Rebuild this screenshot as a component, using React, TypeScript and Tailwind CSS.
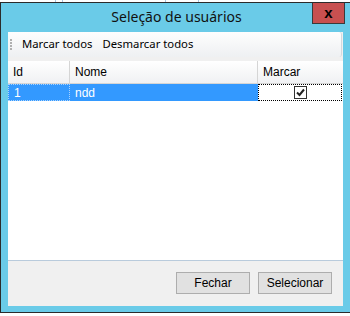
import React from 'react'

const ui = { fontFamily: '"Segoe UI", "Noto Sans", "Open Sans", sans-serif' }
const ms = { fontFamily: '"Liberation Sans", Arial, sans-serif' }

function Check() {
  return (
    <div className="w-[13px] h-[13px] border border-[#333333] bg-white flex items-center justify-center">
      <svg width="9" height="9" viewBox="0 0 9 9">
        <path d="M1 4.5 L3.5 7 L8 1.5" fill="none" stroke="#222" strokeWidth="2" />
      </svg>
    </div>
  )
}

export default function App() {
  return (
    <div className="w-[350px] h-[316px] bg-white overflow-hidden text-black" style={ui}>
      <div className="flex h-[2px] bg-white">
        <div className="ml-[55px] w-[8px] h-[2px] border-x border-[#a8c4e0]" />
        <div className="ml-[102px] w-[34px] h-[2px] border-x border-[#a8c4e0]" />
      </div>
      <div className="w-[360px] h-[311px] bg-[#6acbe8] border-l border-t border-b border-[#2b2b2b] flex flex-col">
        {/* title bar */}
        <div className="h-[29px] flex items-start shrink-0">
          <div className="w-[311px] h-[27px] flex items-center justify-center text-[14px] text-[#111] pl-[40px]">
            Seleção de usuários
          </div>
          <div className="w-[33px] h-[21px] bg-[#c75050] border border-[#3a3a3a] border-t-0 flex items-center justify-center text-[15px] font-bold leading-none pb-[2px]" style={ms}>
            x
          </div>
        </div>

        {/* client area */}
        <div className="ml-[7px] w-[335px] h-[274px] bg-[#f0f0f0] flex flex-col shrink-0">
          <div className="h-[25px] w-[334px] flex items-center bg-gradient-to-b from-[#fefefe] to-[#eef0f2] rounded-r-[3px] border-r border-[#d4d8dd] text-[11.3px]">
            <div className="ml-[2px] w-[3px] h-[13px] flex flex-col justify-between py-[1px]">
              <div className="w-[2px] h-[2px] bg-[#b0b0b0]" />
              <div className="w-[2px] h-[2px] bg-[#b0b0b0]" />
              <div className="w-[2px] h-[2px] bg-[#b0b0b0]" />
              <div className="w-[2px] h-[2px] bg-[#b0b0b0]" />
            </div>
            <span className="ml-[9px]">Marcar todos</span>
            <span className="ml-[10px]">Desmarcar todos</span>
          </div>
          <div className="h-[4px]" />

          {/* grid */}
          <div className="h-[200px] bg-white border-b border-[#b9cbdc] flex flex-col text-[12px]" style={ms}>
            <div className="h-[23px] flex bg-gradient-to-b from-[#ffffff] to-[#f0f1f3] border-b border-[#d5d5d5]">
              <div className="w-[62px] pl-[5px] flex items-center border-r border-[#d5d5d5]">Id</div>
              <div className="w-[188px] pl-[5px] flex items-center border-r border-[#d5d5d5]">Nome</div>
              <div className="w-[84px] pl-[5px] flex items-center">Marcar</div>
            </div>
            <div className="h-[17px] flex">
              <div className="w-[62px] pl-[5px] flex items-center bg-[#3399ff] text-white border border-dotted border-[#a9d3ff]">1</div>
              <div className="w-[188px] pl-[5px] flex items-center bg-[#3399ff] text-white">ndd</div>
              <div className="w-[84px] flex items-center justify-center bg-white border border-dotted border-black">
                <Check />
              </div>
            </div>
          </div>

          {/* footer */}
          <div className="flex justify-end gap-[8px] pt-[11px] pr-[11px] text-[12px]" style={ms}>
            <button className="w-[74px] h-[22px] bg-[#e1e1e1] border border-[#adadad] flex items-center justify-center">Fechar</button>
            <button className="w-[74px] h-[22px] bg-[#e1e1e1] border border-[#adadad] flex items-center justify-center">Selecionar</button>
          </div>
        </div>
      </div>
    </div>
  )
}
